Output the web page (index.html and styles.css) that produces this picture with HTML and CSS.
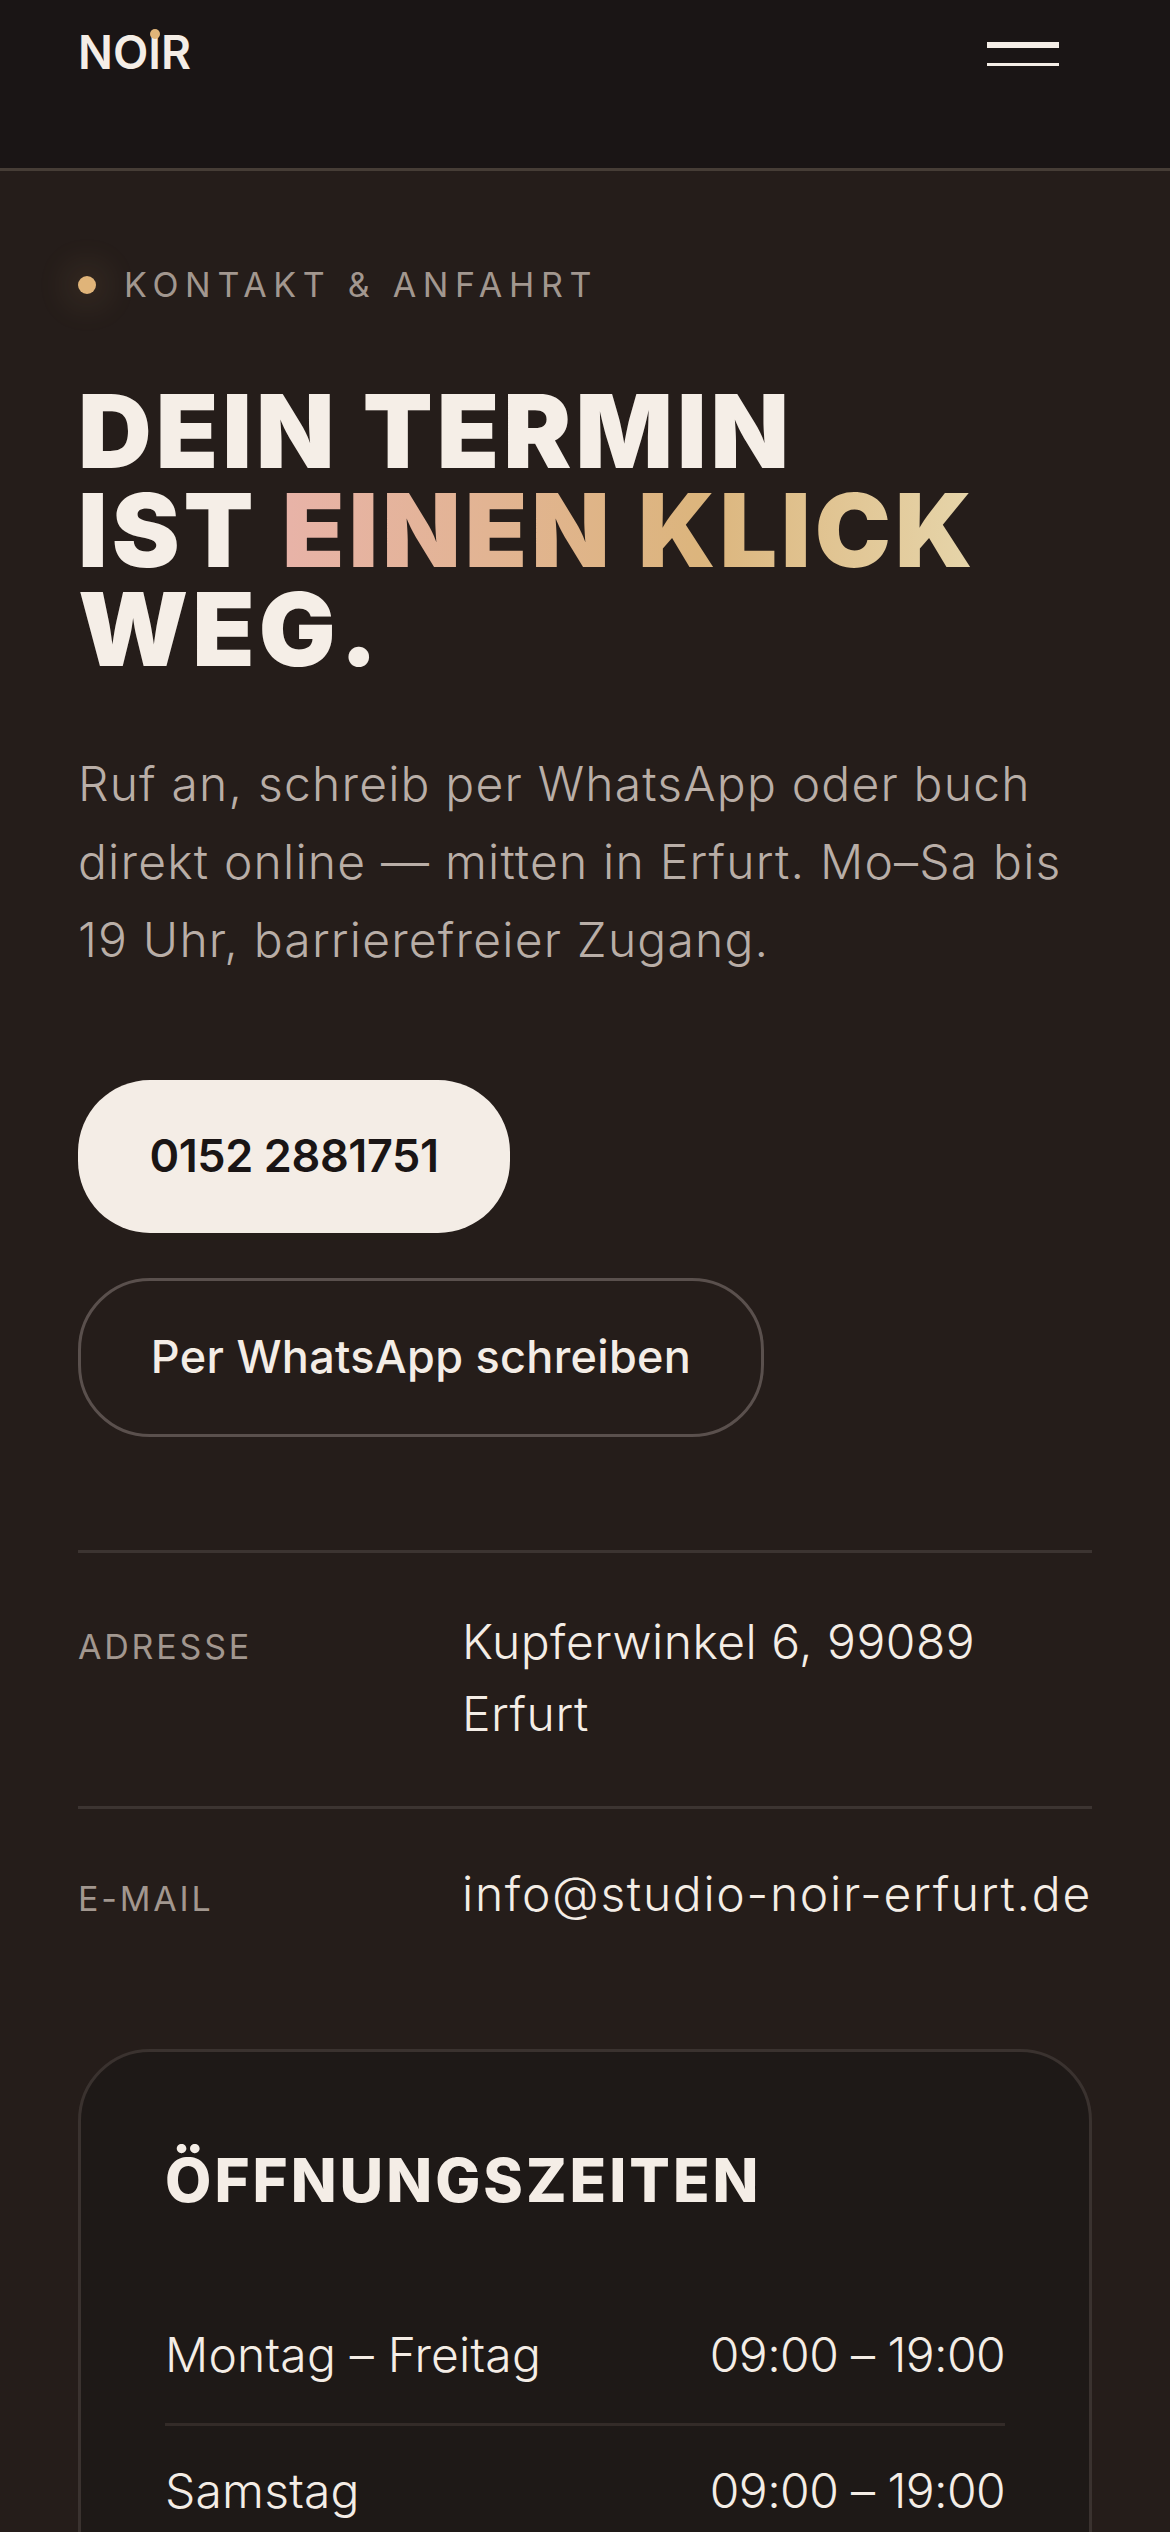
FILE: index.html
```html
<!DOCTYPE html>
<html lang="de">
<head>
<meta charset="utf-8">
<title>Studio Noir – Kontakt</title>
<link rel="stylesheet" href="styles.css">
</head>
<body>
<header class="site-header">
  <a class="logo">NO<span class="logo-i">I</span>R</a>
  <button class="menu" aria-label="Menü"><span class="bar bar-top"></span><span class="bar bar-bottom"></span></button>
</header>
<main class="contact">
  <p class="eyebrow"><span class="dot"></span>KONTAKT &amp; ANFAHRT</p>
  <h1 class="headline">DEIN TERMIN<br>IST <span class="accent">EINEN KLICK</span><br>WEG.</h1>
  <p class="lead">Ruf an, schreib per WhatsApp oder buch<br>direkt online — mitten in Erfurt. Mo–Sa bis<br>19 Uhr, barrierefreier Zugang.</p>
  <div class="actions">
    <a class="btn btn-solid">0152 2881751</a>
    <a class="btn btn-outline">Per WhatsApp schreiben</a>
  </div>
  <dl class="facts">
    <div class="fact fact-address"><dt>ADRESSE</dt><dd>Kupferwinkel 6, 99089<br>Erfurt</dd></div>
    <div class="fact fact-mail"><dt>E-MAIL</dt><dd>info@studio-noir-erfurt.de</dd></div>
  </dl>
  <section class="hours">
    <h2>ÖFFNUNGSZEITEN</h2>
    <div class="hour-row"><span>Montag – Freitag</span><span class="time">09:00 – 19:00</span></div>
    <div class="hour-row"><span>Samstag</span><span class="time">09:00 – 19:00</span></div>
  </section>
</main>
</body>
</html>
```
FILE: styles.css
```css
* { box-sizing: border-box; }
html, body { margin: 0; padding: 0; }
html { height: 2532px; overflow: hidden; }
body {
  width: 1170px;
  height: 2532px;
  overflow: hidden;
  background: #251d1a;
  color: #f4ede6;
  font-family: "Inter", "Liberation Sans", sans-serif;
}
.site-header {
  height: 171px;
  background: #1a1515;
  border-bottom: 3px solid #463d36;
  display: flex;
  justify-content: space-between;
  align-items: flex-start;
  padding: 24px 111px 0 78px;
}
.logo {
  font-size: 46px;
  line-height: 56px;
  font-weight: 600;
  letter-spacing: 0;
  color: #f4ede6;
}
.logo-i { position: relative; }
.logo-i::before {
  content: "";
  position: absolute;
  left: 50%;
  top: 5px;
  width: 10px;
  height: 10px;
  margin-left: -5px;
  border-radius: 50%;
  background: #e0b479;
}
.menu {
  display: flex;
  flex-direction: column;
  gap: 15px;
  width: 72px;
  margin-top: 18px;
  padding: 0;
  border: 0;
  background: none;
}
.bar { display: block; width: 72px; background: #f4ede6; }
.bar-top { height: 6px; }
.bar-bottom { height: 3px; }
.contact { padding: 0 78px; }
.eyebrow {
  display: flex;
  align-items: center;
  gap: 28px;
  margin: 90px 0 0;
  height: 48px;
  font-size: 34px;
  line-height: 48px;
  font-weight: 400;
  letter-spacing: 6.7px;
  color: #a2978f;
}
.dot {
  width: 18px;
  height: 18px;
  border-radius: 50%;
  background: #e0b479;
  box-shadow: 0 0 36px 8px rgba(224, 180, 121, .16);
}
.headline {
  margin: 73px 0 0;
  font-size: 102px;
  line-height: 99px;
  font-weight: 900;
  letter-spacing: 4px;
  color: #f5eee7;
}
.accent {
  background: linear-gradient(90deg, #e8b3a8 0%, #dcb57d 60%, #e6d5aa 100%);
  -webkit-background-clip: text;
  background-clip: text;
  color: transparent;
}
.lead {
  margin: 66px 0 0;
  font-size: 48px;
  line-height: 78px;
  font-weight: 300;
  letter-spacing: 1.2px;
  color: #b9aea7;
}
.actions {
  display: flex;
  flex-direction: column;
  align-items: flex-start;
  gap: 45px;
  margin-top: 101px;
}
.btn {
  display: flex;
  align-items: center;
  justify-content: center;
  padding-bottom: 3px;
  font-size: 45px;
}
.btn-solid {
  width: 432px;
  height: 153px;
  border-radius: 72px;
  background: #f4ede6;
  color: #1a1515;
  font-weight: 600;
  letter-spacing: -.4px;
}
.btn-outline {
  width: 686px;
  height: 159px;
  border-radius: 72px;
  border: 3px solid #5a504d;
  color: #f4ede6;
  font-weight: 500;
  letter-spacing: .3px;
}
.facts {
  margin: 113px 0 0;
  border-top: 3px solid #3c3431;
}
.fact {
  display: grid;
  grid-template-columns: 384px 1fr;
  padding: 53px 0 56px;
}
.fact-mail {
  padding-top: 49px;
  border-top: 3px solid #3c3431;
}
.fact dt {
  padding-top: 5px;
  font-size: 34px;
  line-height: 72px;
  font-weight: 400;
  letter-spacing: 2.8px;
  color: #a2978f;
}
.fact dd {
  margin: 0;
  font-size: 48px;
  line-height: 72px;
  font-weight: 300;
  color: #f4ede6;
}
.fact-address dd { letter-spacing: .5px; }
.fact-mail dd { letter-spacing: 1.7px; }
.hours {
  margin-top: 58px;
  padding: 92px 84px 84px;
  height: 900px;
  background: #1e1917;
  border: 3px solid #3a322f;
  border-radius: 72px;
}
.hours h2 {
  margin: 0 0 74px;
  font-size: 60px;
  line-height: 72px;
  font-weight: 800;
  letter-spacing: 3px;
  color: #f4ede6;
}
.hour-row {
  display: flex;
  justify-content: space-between;
  padding: 35px 0 38px;
  font-size: 48px;
  line-height: 60px;
  font-weight: 300;
  letter-spacing: .2px;
  color: #f4ede6;
}
.hour-row + .hour-row { border-top: 3px solid #332b28; }
.time { letter-spacing: -.6px; }
```
